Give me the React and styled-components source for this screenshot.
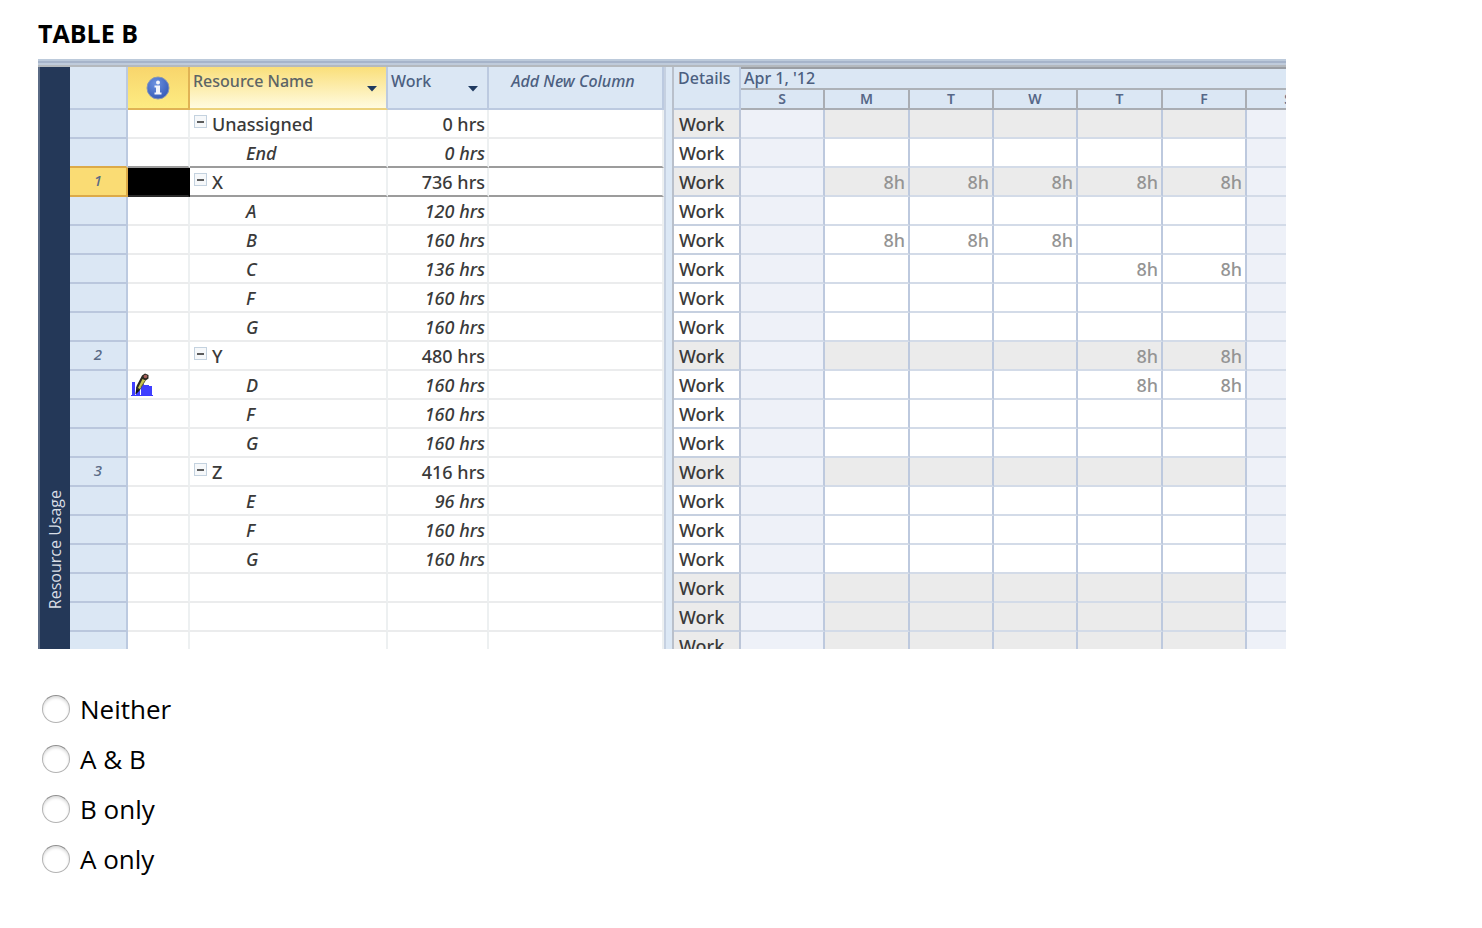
import { useState } from "react";
import styled, { createGlobalStyle, css } from "styled-components";

const GlobalStyle = createGlobalStyle`
  * {
    box-sizing: border-box;
  }

  body {
    margin: 0;
    background: #ffffff;
    color: #000000;
    font-family: "Open Sans", "Noto Sans", sans-serif;
  }

  button {
    padding: 0;
    border: 0;
    background: none;
    font: inherit;
  }
`;

const Page = styled.main`
  padding: 15px 38px;
`;

const Title = styled.h1`
  margin: 0 0 8px;
  font-size: 25px;
  line-height: 36px;
  font-weight: 700;
`;

const Sheet = styled.section`
  max-width: 1248px;
  max-height: 590px;
  overflow: hidden;
`;

const TopStrip = styled.div`
  height: 8px;
  background: linear-gradient(#bccadb 0 2px, #a6b4ca 2px 4px, #bfcbdb 4px 6px, #b4b9be 6px);
`;

const SheetBody = styled.div`
  display: flex;
`;

const Rail = styled.div`
  flex: none;
  display: flex;
  width: 32px;
  max-height: 582px;
  padding-bottom: 40px;
  align-items: flex-end;
  justify-content: center;
  background: #243858;
  border-left: 2px solid #5a6a84;
  color: #d9dee6;
`;

const RailText = styled.span`
  writing-mode: vertical-rl;
  transform: rotate(180deg);
  font-size: 16px;
  line-height: 26px;
`;

const Table = styled.table`
  flex: none;
  width: ${(props) => props.$width}px;
  table-layout: fixed;
  border-collapse: separate;
  border-spacing: 0;
  font-family: "Noto Sans", "Open Sans", sans-serif;
  font-size: 18px;
  line-height: 25px;
  color: #3a3a3a;

  th,
  td {
    padding: 0;
    overflow: hidden;
    white-space: nowrap;
  }

  tbody th,
  tbody td {
    padding-top: 2px;
  }
`;

const HeadCell = styled.th`
  height: 43px;
  background: #dbe7f4;
  border-right: 2px solid #bccae0;
  border-bottom: 2px solid #bccae0;
  color: #4c5f80;
  font-size: 16px;
  line-height: 22px;
  font-weight: 500;
  text-align: left;
  vertical-align: top;

  ${(props) =>
    props.$tone === "indicator" &&
    css`
      background: linear-gradient(#f8d56c, #fdec82);
      border-color: #e0b354;
    `}

  ${(props) =>
    props.$tone === "active" &&
    css`
      background: linear-gradient(#fadf7a, #fffbe0);
      border-bottom-color: #ecd27c;
      color: #5c6566;
    `}
`;

const HeadContent = styled.div`
  display: flex;
  height: 41px;
  padding: ${(props) => (props.$raised ? "0 0 0 4px" : "3px 8px 0 3px")};
  justify-content: ${(props) => (props.$center ? "center" : "space-between")};
  font-style: ${(props) => (props.$italic ? "italic" : "normal")};
`;

const IndicatorContent = styled.div`
  display: flex;
  height: 41px;
  align-items: center;
  justify-content: center;
`;

const MenuButton = styled.button`
  display: flex;
  height: 36px;
  align-items: center;
  color: #1f3a60;
`;

const NumberCell = styled.th`
  height: 29px;
  background: ${(props) => (props.$selected ? "#fadc74" : "#dbe7f4")};
  border-right: 2px solid ${(props) => (props.$selected ? "#dcaa48" : "#bccae0")};
  border-bottom: 2px solid ${(props) => (props.$lined ? "#dcaa48" : "#bac7dd")};
  color: #5a6a86;
  font-size: 15px;
  line-height: 20px;
  font-style: italic;
  font-weight: 500;
  vertical-align: top;
`;

const Cell = styled.td`
  height: 29px;
  background: ${(props) => (props.$filled ? "#000000" : "#ffffff")};
  border-right: 2px solid ${(props) => (props.$filled ? "#000000" : "#edf0f1")};
  border-bottom: 2px solid
    ${(props) => (props.$filled ? "#2a2a2a" : props.$lined ? "#9c9c9c" : "#ebeced")};
  font-style: ${(props) => (props.$italic ? "italic" : "normal")};
  font-weight: 500;
  text-align: ${(props) => (props.$right ? "right" : "left")};

  span {
    padding-right: 2px;
  }
`;

const NameContent = styled.div`
  display: flex;
  height: 25px;
  padding-left: ${(props) => (props.$nested ? 56 : 4)}px;
  gap: 5px;
`;

const IconContent = styled.div`
  display: flex;
  height: 25px;
  padding: 0 0 1px 2px;
  align-items: flex-end;
`;

const Collapse = styled.button`
  display: flex;
  width: 13px;
  height: 13px;
  margin-top: 3px;
  align-items: center;
  justify-content: center;
  border: 1px solid #c4d2df;
  background: #f6f8fa;

  &::before {
    content: "";
    width: 7px;
    height: 2px;
    background: #5c5c5c;
  }
`;

const Divider = styled.div`
  flex: none;
  width: 10px;
  background: #dce8f5;
  border-left: 2px solid #c6d1e1;
  border-right: 2px solid #b9c0cb;
`;

const Timeline = styled.div`
  flex: 1;
  min-width: 0;
  overflow: hidden;
`;

const WeekCell = styled.th`
  height: 23px;
  background: #dbe7f4;
  border-top: 2px solid #999da3;
  border-bottom: 2px solid #adb2b8;
  color: #4c5f80;
  font-size: 16px;
  line-height: 19px;
  font-weight: 500;
  text-align: left;

  span {
    padding-left: 3px;
  }
`;

const DayCell = styled.th`
  height: 20px;
  background: #dbe7f4;
  border-right: 2px solid #a9adb3;
  border-bottom: 2px solid #a9adb3;
  color: #566888;
  font-size: 14px;
  line-height: 18px;
  font-weight: 600;
`;

const DetailCell = styled.th`
  height: 29px;
  background: ${(props) => (props.$shaded ? "#ebebeb" : "#ffffff")};
  border-right: 2px solid #bcc6d9;
  border-bottom: 2px solid #c6d0e0;
  font-weight: 500;
  text-align: left;

  span {
    padding-left: 5px;
  }
`;

const HourCell = styled.td`
  height: 29px;
  background: ${(props) =>
    props.$weekend ? "#eef1f8" : props.$shaded ? "#ebebeb" : "#ffffff"};
  border-right: 2px solid #bdc9de;
  border-bottom: 2px solid #d3dbe8;
  color: #949494;
  font-weight: 500;
  text-align: right;

  span {
    padding-right: 3px;
  }
`;

const Answers = styled.fieldset`
  display: flex;
  flex-direction: column;
  gap: 14px;
  margin: 42px 0 0;
  padding: 0 0 0 4px;
  border: 0;
`;

const Answer = styled.label`
  display: flex;
  align-items: center;
  gap: 10px;
  align-self: flex-start;
  font-size: 26px;
  line-height: 36px;
`;

const Radio = styled.input`
  appearance: none;
  width: 28px;
  height: 28px;
  margin: 0;
  border: 1px solid #b3b3b3;
  border-top-color: #8f8f8f;
  border-radius: 50%;
  background: #ffffff;
  box-shadow: inset 0 2px 3px rgba(0, 0, 0, 0.14);

  &:checked {
    background: radial-gradient(#444444 0 6px, #ffffff 7px);
  }
`;

const rows = [
  { name: "Unassigned", work: "0 hrs", group: true },
  { name: "End", work: "0 hrs" },
  { id: 1, name: "X", work: "736 hrs", group: true, selected: true, hours: [1, 2, 3, 4, 5] },
  { name: "A", work: "120 hrs" },
  { name: "B", work: "160 hrs", hours: [1, 2, 3] },
  { name: "C", work: "136 hrs", hours: [4, 5] },
  { name: "F", work: "160 hrs" },
  { name: "G", work: "160 hrs" },
  { id: 2, name: "Y", work: "480 hrs", group: true, hours: [4, 5] },
  { name: "D", work: "160 hrs", edited: true, hours: [4, 5] },
  { name: "F", work: "160 hrs" },
  { name: "G", work: "160 hrs" },
  { id: 3, name: "Z", work: "416 hrs", group: true },
  { name: "E", work: "96 hrs" },
  { name: "F", work: "160 hrs" },
  { name: "G", work: "160 hrs" },
  { empty: true },
  { empty: true },
  { empty: true },
];

const days = ["S", "M", "T", "W", "T", "F", "S"];
const resourceColumns = [58, 62, 198, 101, 175];
const timelineColumns = [67, 84, 85, 84, 84, 85, 84, 84];
const answers = ["Neither", "A & B", "B only", "A only"];

const sum = (widths) => widths.reduce((total, width) => total + width, 0);

const Columns = ({ widths }) => (
  <colgroup>
    {widths.map((width, index) => (
      <col key={index} width={width} />
    ))}
  </colgroup>
);

const InfoIcon = () => (
  <svg width="24" height="24" viewBox="0 0 24 24" aria-hidden="true">
    <defs>
      <radialGradient id="info" cx="0.4" cy="0.3" r="0.8">
        <stop offset="0" stopColor="#6c92e0" />
        <stop offset="1" stopColor="#2f55b4" />
      </radialGradient>
    </defs>
    <circle cx="12" cy="12" r="11" fill="url(#info)" stroke="#8797b5" />
    <circle cx="12" cy="6.500" r="2" fill="#f2f5fc" />
    <path d="M8.500 9.500h5.500v7h1.500v2h-7v-2H10v-5H8.500z" fill="#f2f5fc" />
  </svg>
);

const EditedIcon = () => (
  <svg width="24" height="24" viewBox="0 0 24 24" role="img" aria-label="Edited assignment">
    <path d="M1 22.500h22" stroke="#3a3aff" />
    <path d="M2 22V9h3v13zM6 22v-8h4v8zM11 22V11h3v11zM14 22V12h5v10zM19 22v-9h3v9z" fill="#3f3fff" />
    <path d="M5.500 21l1-8L12 2.500l3-2 3.500 1.500v3.500L15 8l-5 9z" fill="#2c2b22" />
    <path d="M8 15l4.500-9 3 1.500L10 16z" fill="#c9c552" />
    <path d="M11 14l4-6" stroke="#6b6a33" />
    <circle cx="15.500" cy="3.500" r="1.800" fill="#a8605c" />
    <path d="M5.500 21.500l1-5 3 1z" fill="#111111" />
  </svg>
);

const FilterButton = ({ label }) => (
  <MenuButton type="button" aria-label={label}>
    <svg width="12" height="7" viewBox="0 0 12 7">
      <path d="M1 1h10L6 6.500z" fill="currentColor" />
    </svg>
  </MenuButton>
);

const ResourceTable = () => (
  <Table $width={sum(resourceColumns)}>
    <Columns widths={resourceColumns} />
    <thead>
      <tr>
        <HeadCell />
        <HeadCell $tone="indicator">
          <IndicatorContent>
            <InfoIcon />
          </IndicatorContent>
        </HeadCell>
        <HeadCell $tone="active">
          <HeadContent>
            Resource Name
            <FilterButton label="Filter resource name" />
          </HeadContent>
        </HeadCell>
        <HeadCell>
          <HeadContent>
            Work
            <FilterButton label="Filter work" />
          </HeadContent>
        </HeadCell>
        <HeadCell>
          <HeadContent $center $italic>
            Add New Column
          </HeadContent>
        </HeadCell>
      </tr>
    </thead>
    <tbody>
      {rows.map((row, index) => {
        const lined = row.selected || rows[index + 1]?.selected;
        return (
          <tr key={index}>
            <NumberCell scope="row" $selected={row.selected} $lined={lined}>
              {row.id}
            </NumberCell>
            <Cell $filled={row.selected} $lined={lined}>
              {row.edited && (
                <IconContent>
                  <EditedIcon />
                </IconContent>
              )}
            </Cell>
            <Cell $italic={!row.group} $lined={lined}>
              <NameContent $nested={!row.group}>
                {row.group && <Collapse type="button" aria-label={`Collapse ${row.name}`} />}
                {row.name}
              </NameContent>
            </Cell>
            <Cell $right $italic={!row.group} $lined={lined}>
              <span>{row.work}</span>
            </Cell>
            <Cell $lined={lined} />
          </tr>
        );
      })}
    </tbody>
  </Table>
);

const TimelineTable = () => (
  <Table $width={sum(timelineColumns)}>
    <Columns widths={timelineColumns} />
    <thead>
      <tr>
        <HeadCell rowSpan={2}>
          <HeadContent $raised>Details</HeadContent>
        </HeadCell>
        <WeekCell colSpan={7}>
          <span>Apr 1, '12</span>
        </WeekCell>
      </tr>
      <tr>
        {days.map((day, index) => (
          <DayCell key={index}>{day}</DayCell>
        ))}
      </tr>
    </thead>
    <tbody>
      {rows.map((row, index) => {
        const shaded = row.group || row.empty;
        return (
          <tr key={index}>
            <DetailCell scope="row" $shaded={shaded}>
              <span>Work</span>
            </DetailCell>
            {days.map((day, dayIndex) => (
              <HourCell key={dayIndex} $weekend={day === "S"} $shaded={shaded}>
                {row.hours?.includes(dayIndex) && <span>8h</span>}
              </HourCell>
            ))}
          </tr>
        );
      })}
    </tbody>
  </Table>
);

const App = () => {
  const [answer, setAnswer] = useState("");

  return (
    <>
      <GlobalStyle />
      <Page>
        <Title>TABLE B</Title>
        <Sheet>
          <TopStrip />
          <SheetBody>
            <Rail>
              <RailText>Resource Usage</RailText>
            </Rail>
            <ResourceTable />
            <Divider />
            <Timeline>
              <TimelineTable />
            </Timeline>
          </SheetBody>
        </Sheet>
        <Answers aria-label="Table B answer">
          {answers.map((option) => (
            <Answer key={option}>
              <Radio
                type="radio"
                name="answer"
                value={option}
                checked={answer === option}
                onChange={() => setAnswer(option)}
              />
              {option}
            </Answer>
          ))}
        </Answers>
      </Page>
    </>
  );
};

export default App;
